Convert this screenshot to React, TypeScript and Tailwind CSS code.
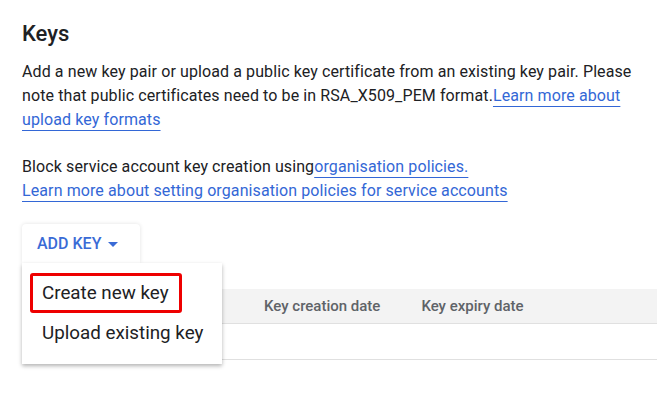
import { useState } from 'react';

export default function App() {
  const [open] = useState(true);

  return (
    <div className="min-h-screen bg-white font-['Roboto',sans-serif] text-[#202124]">
      <div className="pl-[22px] pt-[20px]">
        {/* Header */}
        <h2 className="text-[22px] leading-[28px] font-medium">Keys</h2>

        <p className="mt-[12px] w-[615px] text-[16px] leading-[24px] tracking-[0.1px]">
          Add a new key pair or upload a public key certificate from an existing key pair. Please note that
          public certificates need to be in RSA_X509_PEM format.
          <a className="text-[#3367d6] underline decoration-[#3367d6] underline-offset-[5px]">
            Learn more about upload key formats
          </a>
        </p>

        <p className="mt-[23px] text-[16px] leading-[24px] tracking-[0.1px]">
          Block service account key creation using
          <a className="text-[#3367d6] underline decoration-[#3367d6] underline-offset-[5px]">
            organisation policies.
          </a>
          <br />
          <a className="text-[#3367d6] underline decoration-[#3367d6] underline-offset-[5px]">
            Learn more about setting organisation policies for service accounts
          </a>
        </p>

        {/* Add key + menu */}
        <div className="relative mt-[21px]">
          <button className="flex h-[39px] w-[118px] items-center gap-[7px] rounded-t-[4px] bg-white pl-[15px] text-[16px] font-medium text-[#3a6bd6] shadow-[0_0_4px_rgba(0,0,0,0.12)]">
            ADD KEY
            <svg width="10" height="5" viewBox="0 0 10 5" className="mt-[1px]">
              <path d="M0 0 L10 0 L5 5 Z" fill="#3a6bd6" />
            </svg>
          </button>

          {/* Table */}
          <div className="mt-[26px] w-[635px]">
            <div className="flex h-[35px] items-center border-b border-[#e0e0e0] bg-[#f3f3f3] text-[15px] font-medium text-[#5f6368]">
              <span className="ml-[196px] h-[6px] w-[2px] bg-[#8fb2e8]" />
              <span className="ml-[44px]">Key creation date</span>
              <span className="ml-[41px]">Key expiry date</span>
            </div>
            <div className="h-[36px] border-b border-[#e0e0e0]" />
          </div>

          {open && (
            <div className="absolute left-0 top-[39px] w-[200px] bg-white pt-[10px] pb-[11px] text-[18.8px] shadow-[0_2px_4px_rgba(0,0,0,0.3)]">
              <div className="ml-[8px] flex h-[40px] w-[152px] items-center rounded-[3px] border-[3px] border-[#ee0000] pl-[9px]">
                Create new key
              </div>
              <div className="flex h-[40px] items-center pl-[20px]">Upload existing key</div>
            </div>
          )}
        </div>
      </div>
    </div>
  );
}
